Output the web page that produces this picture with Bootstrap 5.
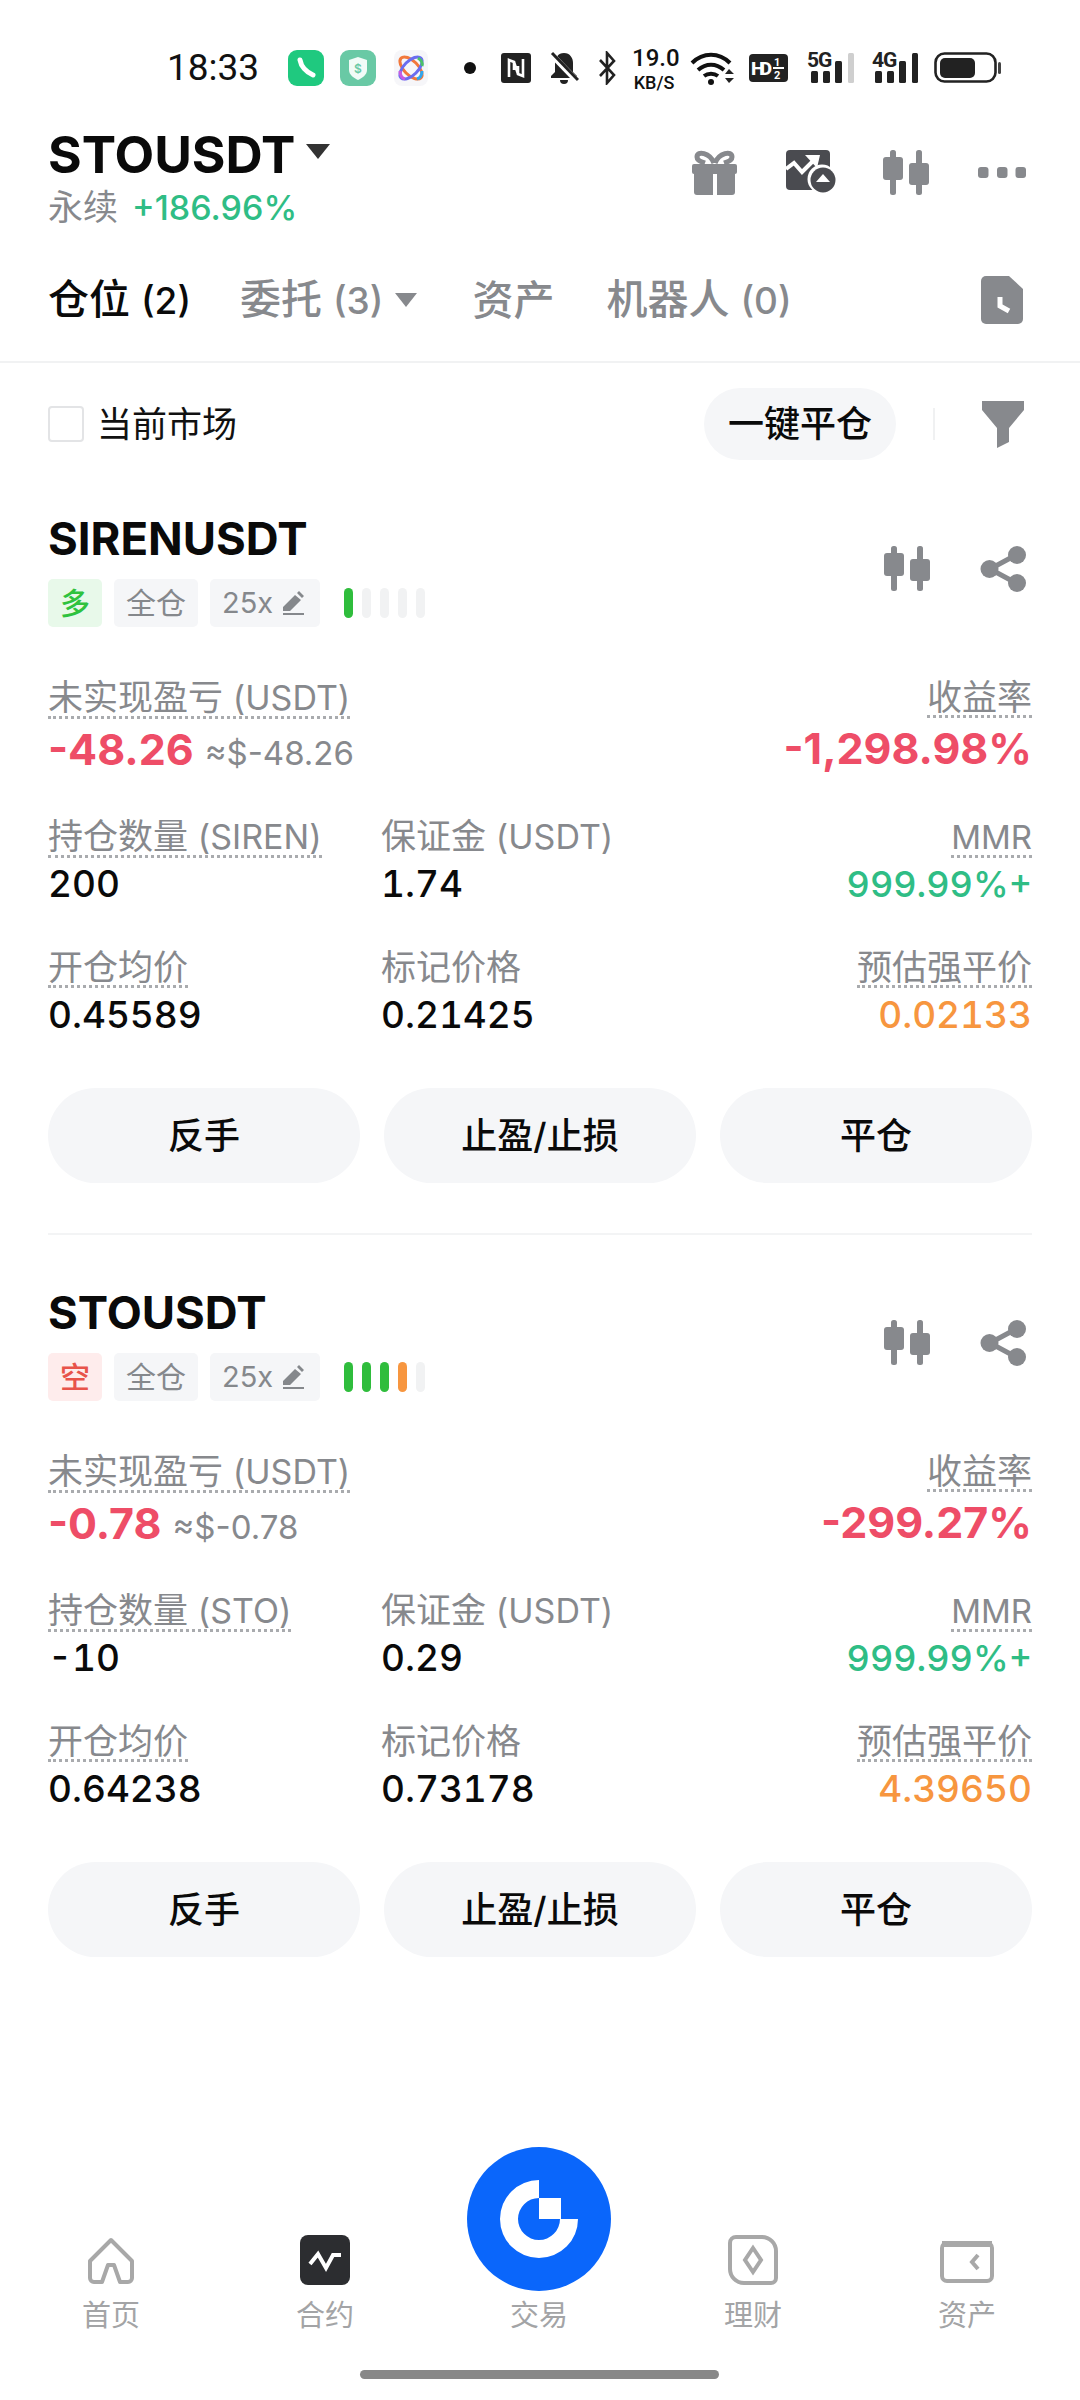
<!DOCTYPE html>
<html lang="zh-CN">
<head>
<meta charset="utf-8">
<title>STOUSDT</title>
<link href="https://cdn.jsdelivr.net/npm/bootstrap@5.3.0/dist/css/bootstrap.min.css" rel="stylesheet">
<style>
:root{--gy:#87898d;--rd:#ee4d67;--gn:#2fbd85;--or:#f7963f;--soft:#f5f6f8}
html,body{background:#fff}
body{font-family:Inter,"Noto Sans CJK SC",sans-serif;color:#0a0a0a;width:1080px;min-height:2400px;display:flex;flex-direction:column;margin:0}
.stbar{height:96px;padding:40px 0 0 167px;display:flex;align-items:center}
.stbar svg{flex:none;display:block}
.clock{font-size:37px;line-height:56px;width:91px;font-family:Roboto,Inter,sans-serif;color:#111}
.m30{margin-left:30px}.m16{margin-left:16px}.m18{margin-left:18px}.m36{margin-left:36px}.m25{margin-left:25px}.m20{margin-left:20px}.m14{margin-left:14px}.m15{margin-left:15px}.m19{margin-left:19px}
.netspeed{color:#111;font-family:Roboto,Inter,sans-serif;text-align:center;font-weight:500;margin-left:16px;width:44px}
.netspeed div:first-child{font-size:24px;line-height:28px}
.netspeed div:last-child{font-size:18px;line-height:21px}
.sig{width:47px}
.sig div{font-family:Roboto,sans-serif;font-weight:700;font-size:21px;line-height:23px;letter-spacing:-1px;color:#222;margin:-3px 0 -19px}
.hdr{padding:30px 54px 0 48px;height:132px}
.pair{font-size:51.500px;line-height:56px;font-weight:700}
.caret-d{width:24px;height:15px;margin-left:10px;margin-top:-6px}
.sub{font-size:35px;line-height:40px;margin-top:5px;color:var(--gy)}
.sub b{font-weight:500;color:var(--gn);margin-left:14px;font-size:34px}
.hacts{margin-top:24px}
.ha1{margin-left:49px}.ha2{margin-left:47px}.ha3{margin-left:49px;margin-top:17px}
.tabs{height:135px;padding:48px 57px 37px 48px;border-bottom:2px solid #f1f2f3}
.tab{font-size:41px;line-height:48px;color:var(--gy);font-weight:500;white-space:nowrap}
.tab span{font-size:37px;font-weight:500}
.tab.on{color:#0a0a0a}
.t2{margin-left:49px}.t3{margin-left:55px}.t4{margin-left:52px}
.tab-caret{width:22px;height:14px;margin-left:12px}
.flt{height:72px;margin-top:25px;padding:0 56px 0 48px}
.box{width:36px;height:36px;border:2px solid #e3e4e6;border-radius:6px;margin:0 13px 0 0;background:#fff}
.flt label{font-size:35px;line-height:40px;color:#111}
.pillbtn{--bs-btn-padding-x:0;--bs-btn-padding-y:0;width:192px;height:72px;border-radius:36px;background:var(--soft);border:0;font-size:36px;font-weight:500;color:#0a0a0a}
.vr-line{width:2px;height:32px;background:#f0f1f2;margin:0 47px 0 37px}
.pos{padding:54px 48px 0}
.name{font-size:45.500px;line-height:50px;font-weight:700}
.tags{margin-top:15px;height:48px}
.tagx{height:48px;font-size:30px;font-weight:400;line-height:48px;padding:0;border-radius:5px;display:inline-block;text-align:center;margin-right:12px;background:var(--soft);color:#85888c}
.tg-long{width:54px;background:#e8f9ea;color:#2fc23e;font-weight:500}
.tg-short{width:54px;background:#feecec;color:#e8534a;font-weight:500}
.tg-cross{width:84px}
.tg-lev{width:110px;font-size:29px;text-align:left;padding-left:12px}
.tg-lev svg{margin-left:9px;vertical-align:-2px}
.meter{margin-left:12px;gap:9px;display:flex}
.meter i{display:block;width:9px;height:30px;border-radius:5px;background:#f1f2f3}
.meter i.g{background:#2fbd3c}
.meter i.o{background:#f7963f}
.acts{margin-right:6px;padding-bottom:4px}
.acts svg+svg{margin-left:50px}
.lbl{display:inline-block;font-size:35px;line-height:36px;color:var(--gy);border-bottom:3px dotted #a9abae}
.lbl.plain{border-bottom:3px solid transparent}
.lbl em{font-style:normal;font-size:34px}
.lbl em.mm{font-size:33px}
.r1{margin-top:52px}
.r2{margin-top:44px}
.r3{margin-top:43.500px}
.val{font-size:37px;line-height:42px;font-weight:500;margin-top:5px;font-variant-numeric:tabular-nums}
.r3 .val{margin-top:6.500px}
.val.cg{font-size:36px}
.big{font-size:43px;font-weight:700;margin-top:9px;line-height:42px}
.big small{font-size:33px;font-weight:400;color:var(--gy);margin-left:11px}
.cr{color:var(--rd)}.cg{color:var(--gn)}.co{color:var(--or)}
.c1{flex:0 0 333px}
.c2{flex:1 1 auto}
.btns{margin-top:52px;gap:24px}
.btns .btn{flex:1 1 0;height:95px;border-radius:48px;background:var(--soft);border:0;font-size:36px;font-weight:500;color:#0a0a0a;padding:0}
.sep{height:2px;background:#f3f4f5;margin:50px 48px 0}
.sep + .pos{padding-top:53px}
.foot{margin-top:auto;padding:0 5px 0 4px}
.fitem{flex:0 0 214px;display:flex;flex-direction:column;align-items:center;justify-content:flex-end}
.fitem span{font-size:29px;line-height:36px;color:#a3a4a6;margin-top:13px;font-weight:400}
.fitem.mid span{margin-top:7px}
.homebar{width:359px;height:9px;border-radius:5px;background:#888;margin:36px auto 21px}
</style>
</head>
<body>

<div class="stbar">
  <div class="clock">18:33</div>
  <svg class="m30" width="36" height="36" viewBox="0 0 36 36"><rect width="36" height="36" rx="9" fill="#1fc97f"/><path d="M12 10c1 6 6 12 13 15" stroke="#fff" stroke-width="5" fill="none" stroke-linecap="round"/></svg>
  <svg class="m16" width="36" height="36" viewBox="0 0 36 36"><rect width="36" height="36" rx="9" fill="#69c9a5"/><path d="M9 10l9-3 9 3v10c0 5-5 8-9 10-4-2-9-5-9-10z" fill="#f1fbf7"/><text x="18" y="23" font-size="12" font-family="Inter,sans-serif" text-anchor="middle" fill="#69c9a5" font-weight="600">$</text></svg>
  <svg class="m18" width="34" height="36" viewBox="0 0 34 36"><rect width="34" height="36" rx="8" fill="#f6f6f9"/><g fill="none" stroke-width="3"><ellipse cx="17" cy="18" rx="14" ry="7" transform="rotate(45 17 18)" stroke="#f2783c"/><ellipse cx="17" cy="18" rx="14" ry="7" transform="rotate(-45 17 18)" stroke="#6a6df0"/><path d="M24 8c3 2 5 5 4 8" stroke="#4cc06a"/><path d="M28 21c0 4-2 7-5 8" stroke="#2fa6ee"/><path d="M6 21c0 4 2 7 5 8" stroke="#c95ae0"/></g></svg>
  <svg class="m36" width="12" height="12" viewBox="0 0 12 12"><circle cx="6" cy="6" r="6" fill="#111"/></svg>
  <svg class="m25" width="30" height="30" viewBox="0 0 30 30"><rect width="30" height="30" rx="3" fill="#222"/><path d="M8 24V7l5 2v8M22 6v17l-5-2v-8M13 9l4 12" stroke="#fff" stroke-width="2.6" fill="none"/></svg>
  <svg class="m18" width="30" height="34" viewBox="0 0 30 34"><path d="M15 2c-6 0-9 5-9 10v9l-4 4v2h26v-2l-4-4v-9c0-5-3-10-9-10z" fill="#222"/><path d="M11 29a4 4 0 0 0 8 0z" fill="#222"/><path d="M2 3l26 27" stroke="#fff" stroke-width="6"/><path d="M3 2l26 27" stroke="#222" stroke-width="3"/></svg>
  <svg class="m20" width="17" height="34" viewBox="0 0 17 34"><path d="M1 9l14 15-7 8V2l7 8L1 25" fill="none" stroke="#222" stroke-width="2.6"/></svg>
  <div class="netspeed"><div>19.0</div><div>KB/S</div></div>
  <svg class="m14" width="44" height="33" viewBox="0 0 44 33"><g fill="none" stroke="#111" stroke-width="4"><path d="M2 11c11-11 27-11 38 0"/><path d="M8 18c8-7 18-7 26 0"/><path d="M14 24c4-3 10-3 14 0"/></g><circle cx="21" cy="30" r="3" fill="#111"/><path d="M35 22l4-5 5 5zM35 26h9l-5 5z" fill="#222"/></svg>
  <svg class="m15" width="39" height="28" viewBox="0 0 39 28"><rect width="39" height="28" rx="4" fill="#222"/><text x="2" y="21" font-size="19" font-weight="800" font-family="Roboto,sans-serif" fill="#fff" textLength="21">HD</text><text x="25" y="12" font-size="11" font-weight="700" font-family="Roboto,sans-serif" fill="#fff">1</text><text x="25" y="25" font-size="11" font-weight="700" font-family="Roboto,sans-serif" fill="#fff">2</text><rect x="24" y="13" width="11" height="2" fill="#fff"/></svg>
  <div class="sig m19"><div>5G</div><svg width="47" height="31" viewBox="0 0 47 31"><g fill="#222"><rect x="4" y="18" width="7" height="12" rx="1.500"/><rect x="16" y="18" width="7" height="12" rx="1.500"/><rect x="28" y="8" width="7" height="22" rx="1.500"/></g><rect x="41" width="6" height="30" rx="1.500" fill="#cfcfcf"/></svg></div>
  <div class="sig m18"><div>4G</div><svg width="47" height="31" viewBox="0 0 47 31"><g fill="#222"><rect x="3" y="18" width="7" height="12" rx="1.500"/><rect x="15" y="18" width="7" height="12" rx="1.500"/><rect x="27" y="8" width="7" height="22" rx="1.500"/><rect x="40" width="6" height="30" rx="1.500"/></g></svg></div>
  <svg class="m15" width="68" height="32" viewBox="0 0 68 32"><rect x="1.500" y="1.500" width="60" height="28" rx="9" fill="none" stroke="#222" stroke-width="2.6"/><rect x="6" y="6" width="35" height="20" rx="5" fill="#222"/><rect x="64" y="10" width="3" height="12" rx="1.500" fill="#444"/></svg>
</div>

<header class="hdr d-flex justify-content-between">
  <div>
    <div class="d-flex align-items-center">
      <div class="pair">STOUSDT</div>
      <svg class="caret-d" viewBox="0 0 24 15"><path d="M0 0h24L12 15z" fill="#333"/></svg>
    </div>
    <div class="sub">永续<b>+186.96%</b></div>
  </div>
  <div class="hacts d-flex align-items-start">
    <svg width="45" height="45" viewBox="0 0 45 45"><g fill="#87898d"><rect x="0" y="14" width="45" height="10" rx="2"/><path d="M2 24h19v21H5a3 3 0 0 1-3-3zM25 24h18v18a3 3 0 0 1-3 3H25z"/></g><path d="M22 13C18 3 5 0 5 7c0 4 5 5 8 6M23 13c4-10 17-13 17-6 0 4-5 5-8 6" fill="none" stroke="#87898d" stroke-width="5"/></svg>
    <svg class="ha1" width="50" height="44" viewBox="0 0 50 44"><rect y="0" width="44" height="40" rx="4" fill="#4a4b50"/><path d="M0 19l8-6 8 9 14-14" fill="none" stroke="#fff" stroke-width="4"/><path d="M19 5h15l-3 13z" fill="#fff"/><circle cx="36" cy="29" r="14.500" fill="#fff"/><circle cx="37" cy="30" r="12.500" fill="#4a4b50"/><path d="M37 24l7 8H30z" fill="#fff"/></svg>
    <svg class="ha2" width="46" height="45" viewBox="0 0 46 45"><g fill="#87898d"><rect x="7" width="6" height="45" rx="2.500"/><rect y="7" width="20" height="23" rx="3"/><rect x="33" width="6" height="45" rx="2.500"/><rect x="26" y="13" width="20" height="22" rx="3"/></g></svg>
    <svg class="ha3" width="48" height="11" viewBox="0 0 48 11"><g fill="#87898d"><rect width="10.500" height="11" rx="3"/><rect x="19" width="10.500" height="11" rx="3"/><rect x="37.500" width="10.500" height="11" rx="3"/></g></svg>
  </div>
</header>

<nav class="tabs d-flex align-items-center">
  <div class="tab on">仓位 <span>(2)</span></div>
  <div class="tab t2">委托 <span>(3)</span></div>
  <svg class="tab-caret" viewBox="0 0 22 14"><path d="M0 0h22L11 14z" fill="#87898d"/></svg>
  <div class="tab t3">资产</div>
  <div class="tab t4">机器人 <span>(0)</span></div>
  <svg class="ms-auto" width="42" height="48" viewBox="0 0 42 48"><path d="M5 0h23l14 13v30a5 5 0 0 1-5 5H5a5 5 0 0 1-5-5V5a5 5 0 0 1 5-5z" fill="#87898d"/><path d="M19 21v9l9 5" fill="none" stroke="#fff" stroke-width="5"/></svg>
</nav>

<div class="flt d-flex align-items-center">
  <input class="form-check-input box" type="checkbox" id="cur">
  <label for="cur">当前市场</label>
  <button class="btn pillbtn ms-auto" type="button">一键平仓</button>
  <div class="vr-line"></div>
  <svg width="42" height="47" viewBox="0 0 42 47"><path d="M0 0h42v9L27 27v14l-12 6V27L0 9z" fill="#87898d"/></svg>
</div>

<section class="pos">
  <div class="d-flex justify-content-between">
    <div>
      <div class="name">SIRENUSDT</div>
      <div class="tags d-flex align-items-center">
        <span class="badge tagx tg-long">多</span>
        <span class="badge tagx tg-cross">全仓</span>
        <span class="badge tagx tg-lev">25x<svg width="23" height="25" viewBox="0 0 23 25"><path d="M1 17L13 5l6 5L8 21H1zM15 3l2-2 5 5-2 2zM1 23h21v2H1z" fill="#85888c"/></svg></span>
        <div class="meter"><i class="g"></i><i></i><i></i><i></i><i></i></div>
      </div>
    </div>
    <div class="acts d-flex align-items-center">
      <svg width="46" height="45" viewBox="0 0 46 45"><g fill="#87898d"><rect x="7" width="6" height="45" rx="2.500"/><rect y="7" width="20" height="23" rx="3"/><rect x="33" width="6" height="45" rx="2.500"/><rect x="26" y="13" width="20" height="22" rx="3"/></g></svg>
      <svg width="46" height="46" viewBox="0 0 46 46"><path d="M36 9L10 23l26 14" fill="none" stroke="#87898d" stroke-width="5"/><g fill="#87898d"><circle cx="37" cy="9" r="9"/><circle cx="9.500" cy="23" r="9"/><circle cx="37" cy="37" r="9"/></g></svg>
    </div>
  </div>
  <div class="r1 d-flex justify-content-between">
    <div><div class="lbl">未实现盈亏 <em>(USDT)</em></div><div class="big cr">-48.26<small>≈$-48.26</small></div></div>
    <div class="text-end"><div class="lbl">收益率</div><div class="big cr">-1,298.98%</div></div>
  </div>
  <div class="r2 d-flex">
    <div class="c1"><div class="lbl">持仓数量 <em>(SIREN)</em></div><div class="val">200</div></div>
    <div class="c2"><div class="lbl plain">保证金 <em>(USDT)</em></div><div class="val">1.74</div></div>
    <div class="text-end"><div class="lbl"><em class="mm">MMR</em></div><div class="val cg">999.99%+</div></div>
  </div>
  <div class="r3 d-flex">
    <div class="c1"><div class="lbl">开仓均价</div><div class="val">0.45589</div></div>
    <div class="c2"><div class="lbl plain">标记价格</div><div class="val">0.21425</div></div>
    <div class="text-end"><div class="lbl">预估强平价</div><div class="val co">0.02133</div></div>
  </div>
  <div class="btns d-flex">
    <button class="btn" type="button">反手</button>
    <button class="btn" type="button">止盈/止损</button>
    <button class="btn" type="button">平仓</button>
  </div>
</section>

<div class="sep"></div>

<section class="pos">
  <div class="d-flex justify-content-between">
    <div>
      <div class="name">STOUSDT</div>
      <div class="tags d-flex align-items-center">
        <span class="badge tagx tg-short">空</span>
        <span class="badge tagx tg-cross">全仓</span>
        <span class="badge tagx tg-lev">25x<svg width="23" height="25" viewBox="0 0 23 25"><path d="M1 17L13 5l6 5L8 21H1zM15 3l2-2 5 5-2 2zM1 23h21v2H1z" fill="#85888c"/></svg></span>
        <div class="meter"><i class="g"></i><i class="g"></i><i class="g"></i><i class="o"></i><i></i></div>
      </div>
    </div>
    <div class="acts d-flex align-items-center">
      <svg width="46" height="45" viewBox="0 0 46 45"><g fill="#87898d"><rect x="7" width="6" height="45" rx="2.500"/><rect y="7" width="20" height="23" rx="3"/><rect x="33" width="6" height="45" rx="2.500"/><rect x="26" y="13" width="20" height="22" rx="3"/></g></svg>
      <svg width="46" height="46" viewBox="0 0 46 46"><path d="M36 9L10 23l26 14" fill="none" stroke="#87898d" stroke-width="5"/><g fill="#87898d"><circle cx="37" cy="9" r="9"/><circle cx="9.500" cy="23" r="9"/><circle cx="37" cy="37" r="9"/></g></svg>
    </div>
  </div>
  <div class="r1 d-flex justify-content-between">
    <div><div class="lbl">未实现盈亏 <em>(USDT)</em></div><div class="big cr">-0.78<small>≈$-0.78</small></div></div>
    <div class="text-end"><div class="lbl">收益率</div><div class="big cr">-299.27%</div></div>
  </div>
  <div class="r2 d-flex">
    <div class="c1"><div class="lbl">持仓数量 <em>(STO)</em></div><div class="val">-10</div></div>
    <div class="c2"><div class="lbl plain">保证金 <em>(USDT)</em></div><div class="val">0.29</div></div>
    <div class="text-end"><div class="lbl"><em class="mm">MMR</em></div><div class="val cg">999.99%+</div></div>
  </div>
  <div class="r3 d-flex">
    <div class="c1"><div class="lbl">开仓均价</div><div class="val">0.64238</div></div>
    <div class="c2"><div class="lbl plain">标记价格</div><div class="val">0.73178</div></div>
    <div class="text-end"><div class="lbl">预估强平价</div><div class="val co">4.39650</div></div>
  </div>
  <div class="btns d-flex">
    <button class="btn" type="button">反手</button>
    <button class="btn" type="button">止盈/止损</button>
    <button class="btn" type="button">平仓</button>
  </div>
</section>

<footer class="foot">
  <div class="d-flex align-items-end">
    <div class="fitem">
      <svg width="50" height="48" viewBox="0 0 50 48"><path d="M25 3L4 24v17a4 4 0 0 0 4 4h8l6-17h6l6 17h8a4 4 0 0 0 4-4V24z" fill="none" stroke="#a8a8a8" stroke-width="4" stroke-linejoin="round"/></svg>
      <span>首页</span>
    </div>
    <div class="fitem">
      <svg width="50" height="50" viewBox="0 0 50 50"><rect width="50" height="50" rx="8" fill="#2c2d30"/><path d="M10 29l8-10 8 14 7-13h8" fill="none" stroke="#fff" stroke-width="4"/></svg>
      <span>合约</span>
    </div>
    <div class="fitem mid">
      <svg width="144" height="144" viewBox="0 0 144 144"><circle cx="72" cy="72" r="72" fill="#0a66fb"/><path d="M72 33A39 39 0 1 0 111 72H93A21 21 0 1 1 72 51Z" fill="#fff"/><rect x="72" y="51" width="22" height="21" fill="#fff"/></svg>
      <span>交易</span>
    </div>
    <div class="fitem">
      <svg width="50" height="50" viewBox="0 0 50 50"><path d="M8 2h26a14 14 0 0 1 14 14v27a5 5 0 0 1-5 5H16A14 14 0 0 1 2 34V8a6 6 0 0 1 6-6z" fill="none" stroke="#a8a8a8" stroke-width="4"/><path d="M25 13l8 12-8 12-8-12z" fill="none" stroke="#a8a8a8" stroke-width="4"/></svg>
      <span>理财</span>
    </div>
    <div class="fitem">
      <svg width="54" height="46" viewBox="0 0 54 46"><rect x="2" y="4" width="50" height="38" rx="5" fill="none" stroke="#a8a8a8" stroke-width="4"/><path d="M2 5h50" stroke="#a8a8a8" stroke-width="6"/><path d="M38 16l-6 7 6 7" fill="none" stroke="#a8a8a8" stroke-width="4"/></svg>
      <span>资产</span>
    </div>
  </div>
  <div class="homebar"></div>
</footer>

</body>
</html>
